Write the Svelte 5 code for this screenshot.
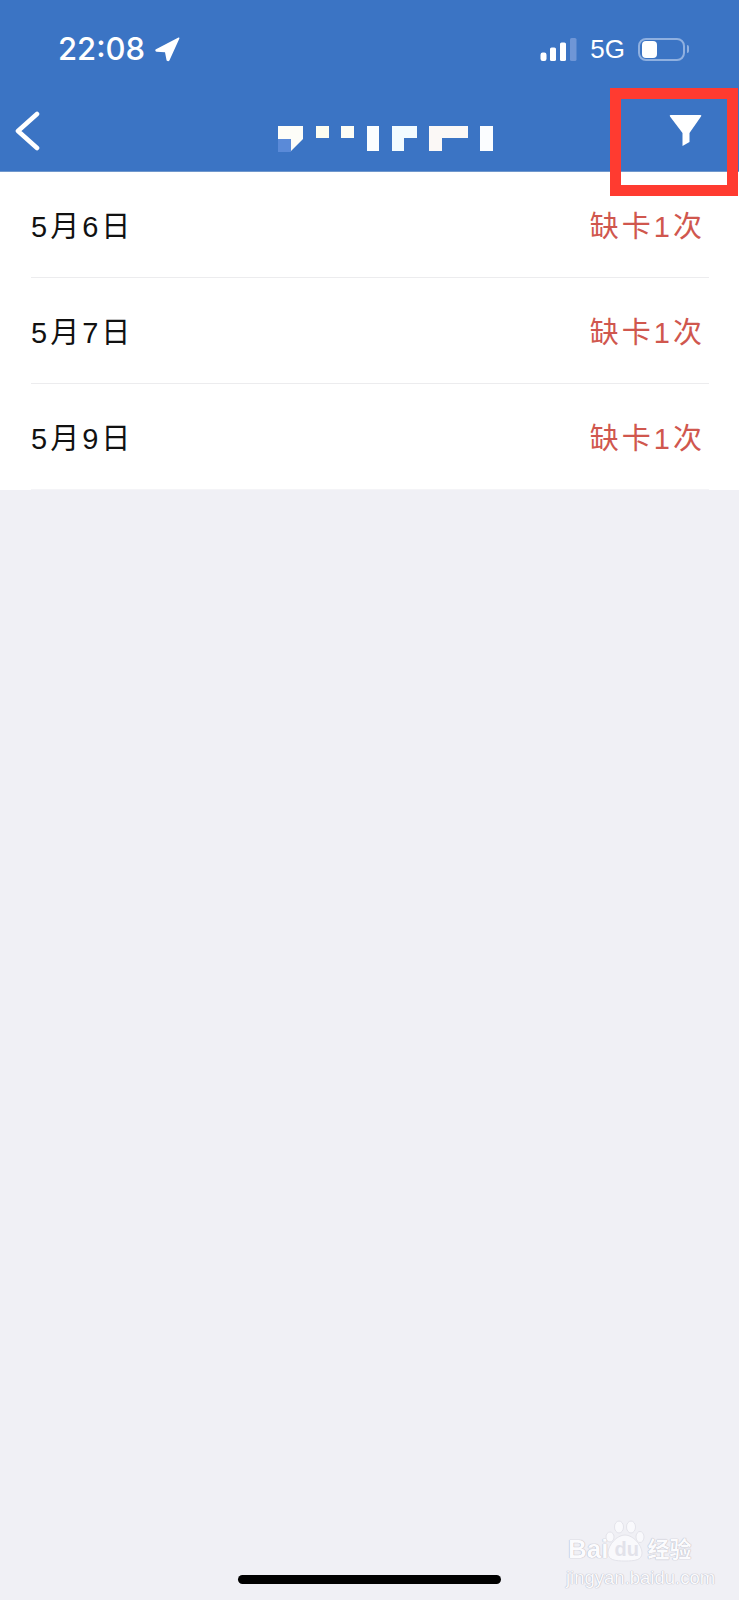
<script>
  const rows = [
    { date: '5月6日', status: '缺卡1次' },
    { date: '5月7日', status: '缺卡1次' },
    { date: '5月9日', status: '缺卡1次' }
  ];
</script>

<div class="page">
  <header class="header">
    <div class="status">
      <div class="left">
        <span class="time">22:08</span>
        <svg class="arrow" width="26" height="26" viewBox="0 0 26 26" aria-hidden="true">
          <path d="M24.5 1.5 L1.5 13.5 Q0.6 15.4 2.5 15.8 L11 16.2 L12.6 24.6 Q14.4 26 15.4 24.6 L25.4 2.6 Q25.6 1 24.5 1.5 Z" fill="#fff"/>
        </svg>
      </div>
      <div class="right">
        <svg class="signal" width="37" height="23" viewBox="0 0 37 23" aria-hidden="true">
          <rect x="0.5" y="14.5" width="6" height="8.5" rx="2.2" fill="#fff"/>
          <rect x="10" y="9.5" width="6" height="13.5" rx="1.6" fill="#fff"/>
          <rect x="20" y="4.5" width="6" height="18.5" rx="1.6" fill="#fff"/>
          <rect x="30" y="0" width="6.5" height="23" rx="1.6" fill="#6f96d6"/>
        </svg>
        <span class="net">5G</span>
        <div class="battery"><div class="level"></div></div>
        <div class="nub"></div>
      </div>
    </div>
    <nav class="nav">
      <svg class="back" width="28" height="40" viewBox="0 0 28 40" aria-hidden="true">
        <path d="M23 3 L4 20 L23 37" fill="none" stroke="#fff" stroke-width="4.6" stroke-linecap="round" stroke-linejoin="round"/>
      </svg>
      <svg class="mosaic" width="216" height="26" viewBox="0 0 216 26" aria-hidden="true">
        <rect x="0" y="13" width="13" height="13" fill="#5a8ad8"/>
        <path d="M0 0 H25 V13 L13 25 V13 H0 Z" fill="#fdfdf8"/>
        <rect x="38" y="0" width="13" height="12" fill="#fdfdf0"/>
        <rect x="63" y="0" width="13" height="12" fill="#fdfdf5"/>
        <rect x="89" y="0" width="12" height="25" fill="#fbfeff"/>
        <path d="M114 0 H139 V12 H126 V25 H114 Z" fill="#f2fbff"/>
        <path d="M151 0 H190 V12 H164 V25 H151 Z" fill="#fbf8f6"/>
        <rect x="202" y="0" width="13" height="25" fill="#fbfdff"/>
      </svg>
      <svg class="filter" width="34" height="34" viewBox="0 0 34 34" aria-hidden="true">
        <path d="M1.5 1 H31.5 Q33 1 32 2.6 L20.5 19 V28 L13.5 32 V19 L1 2.6 Q0.2 1 1.5 1 Z" fill="#fff"/>
      </svg>
    </nav>
  </header>

  <main class="list">
    {#each rows as row}
      <div class="row">
        <span class="date">{row.date}</span>
        <span class="state">{row.status}</span>
      </div>
    {/each}
  </main>

  <div class="highlight"></div>

  <div class="watermark" aria-hidden="true">
    <div class="brand">
      <span class="bai">Bai</span>
      <span class="paw">
        <svg width="40" height="42" viewBox="0 0 40 42">
          <g fill="#f9f9fc" stroke="#dedee6" stroke-width="0.8">
            <ellipse cx="5" cy="17" rx="4" ry="5"/>
            <ellipse cx="14" cy="7" rx="4.5" ry="6"/>
            <ellipse cx="26" cy="7" rx="4.5" ry="6"/>
            <ellipse cx="35" cy="17" rx="4" ry="5.5"/>
            <path d="M20 15 C28 15 37 25 37 33 C37 40 30 41 20 41 C10 41 3 40 3 33 C3 25 12 15 20 15 Z"/>
          </g>
        </svg>
        <span class="du">du</span>
      </span>
      <span class="jy">经验</span>
    </div>
    <div class="url">jingyan.baidu.com</div>
  </div>

  <div class="home"></div>
</div>

<style>
  :global(body) {
    margin: 0;
    background: #f0f0f5;
  }
  .page {
    position: relative;
    width: 739px;
    height: 1600px;
    overflow: hidden;
    background: #f0f0f5;
    font-family: "Liberation Sans", "Noto Sans CJK SC", sans-serif;
  }
  .header {
    height: 172px;
    background: #3b74c4;
    box-shadow: inset 0 -1px 0 #6f97cc;
    color: #fff;
  }
  .status {
    height: 88px;
    display: flex;
    justify-content: space-between;
    padding: 36px 50px 0 58px;
    box-sizing: border-box;
  }
  .left, .right {
    display: flex;
    align-items: flex-start;
  }
  .time {
    font-family: "Inter", sans-serif;
    font-size: 31px;
    line-height: 26px;
    font-weight: 500;
  }
  .arrow {
    margin: 0 0 0 9px;
  }
  .signal {
    margin: 2px 0 0 0;
  }
  .net {
    font-size: 26px;
    line-height: 26px;
    margin-left: 13px;
  }
  .battery {
    width: 47px;
    height: 23px;
    margin: 2px 0 0 13px;
    box-sizing: border-box;
    border: 2px solid #8fb0e0;
    border-radius: 8px;
    padding: 1px 2px;
  }
  .level {
    width: 15px;
    height: 17px;
    border-radius: 4px;
    background: #fff;
  }
  .nub {
    width: 2px;
    height: 8px;
    margin: 9px 0 0 2px;
    border-radius: 0 2px 2px 0;
    background: #8fb0e0;
  }
  .nav {
    display: flex;
    align-items: flex-start;
    height: 84px;
  }
  .back {
    margin: 23px 0 0 14px;
  }
  .mosaic {
    margin: 38px 0 0 236px;
  }
  .filter {
    margin: 26px 0 0 175px;
  }
  .list {
    background: #fff;
    padding: 0 30px 0 31px;
  }
  .row {
    height: 106px;
    box-sizing: border-box;
    display: flex;
    justify-content: space-between;
    align-items: center;
    padding-bottom: 1px;
    border-bottom: 1px solid #ececee;
    font-size: 29px;
    letter-spacing: 3px;
  }
  .row:last-child {
    border-bottom-color: #f4f4f7;
  }
  .date {
    color: #111;
  }
  .state {
    color: #d0574e;
    margin-right: 4px;
  }
  .highlight {
    position: absolute;
    left: 610px;
    top: 88px;
    width: 128px;
    height: 108px;
    box-sizing: border-box;
    border: 11px solid #ff3b30;
  }
  .watermark {
    position: absolute;
    left: 566px;
    top: 1520px;
    width: 136px;
    color: #fbfbfd;
    text-shadow: 0 0 1px #b4b4c2, 0 0 1px #b4b4c2;
  }
  .brand {
    display: flex;
    align-items: flex-end;
    height: 42px;
  }
  .bai {
    font-size: 26px;
    line-height: 26px;
    font-weight: 700;
    margin-left: 2px;
  }
  .paw {
    position: relative;
    margin-left: -3px;
    width: 40px;
    height: 42px;
  }
  .paw svg {
    display: block;
  }
  .du {
    position: absolute;
    left: 9px;
    bottom: 1px;
    font-size: 20px;
    line-height: 24px;
    font-weight: 700;
    color: #e2e2ea;
    text-shadow: none;
  }
  .jy {
    font-size: 22px;
    line-height: 24px;
    margin-left: 2px;
    font-weight: 700;
  }
  .url {
    margin-top: 6px;
    font-size: 18.5px;
    line-height: 20px;
    white-space: nowrap;
  }
  .home {
    position: absolute;
    left: 238px;
    bottom: 16px;
    width: 263px;
    height: 9px;
    border-radius: 5px;
    background: #000;
  }
</style>
